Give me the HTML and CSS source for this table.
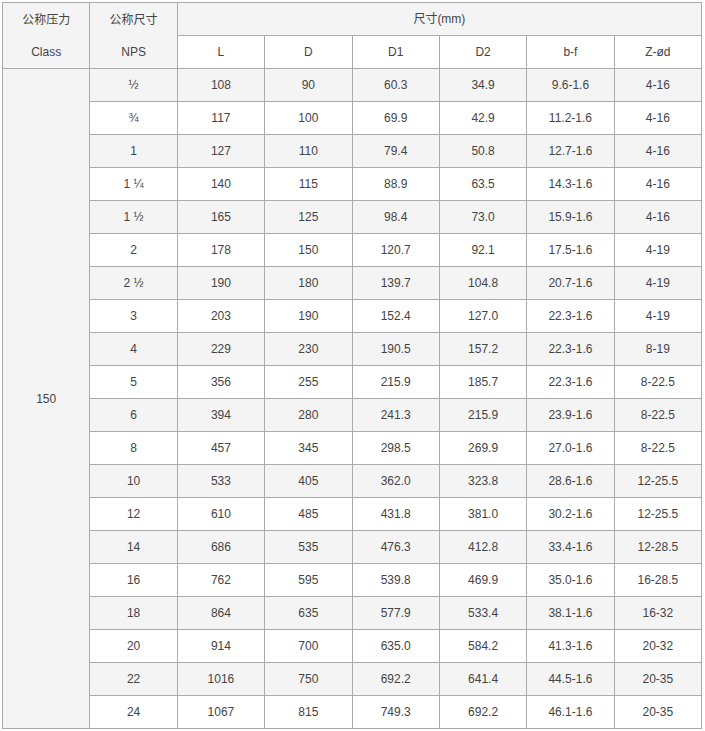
FILE: index.html
```html
<!DOCTYPE html>
<html lang="zh">
<head>
<meta charset="utf-8">
<link rel="stylesheet" href="styles.css">
</head>
<body>
<table class="spec">
  <colgroup>
    <col class="c"><col class="c"><col class="c"><col class="c"><col class="c"><col class="c"><col class="c"><col class="c">
  </colgroup>
  <tbody>
    <tr>
      <td rowspan="2" class="two">公称压力<br>Class</td>
      <td rowspan="2" class="two">公称尺寸<br>NPS</td>
      <td colspan="6">尺寸(mm)</td>
    </tr>
    <tr>
      <td>L</td><td>D</td><td>D1</td><td>D2</td><td>b-f</td><td>Z-ød</td>
    </tr>
    <tr><td rowspan="20">150</td><td>½</td><td>108</td><td>90</td><td>60.3</td><td>34.9</td><td>9.6-1.6</td><td>4-16</td></tr>
    <tr><td>¾</td><td>117</td><td>100</td><td>69.9</td><td>42.9</td><td>11.2-1.6</td><td>4-16</td></tr>
    <tr><td>1</td><td>127</td><td>110</td><td>79.4</td><td>50.8</td><td>12.7-1.6</td><td>4-16</td></tr>
    <tr><td>1 ¼</td><td>140</td><td>115</td><td>88.9</td><td>63.5</td><td>14.3-1.6</td><td>4-16</td></tr>
    <tr><td>1 ½</td><td>165</td><td>125</td><td>98.4</td><td>73.0</td><td>15.9-1.6</td><td>4-16</td></tr>
    <tr><td>2</td><td>178</td><td>150</td><td>120.7</td><td>92.1</td><td>17.5-1.6</td><td>4-19</td></tr>
    <tr><td>2 ½</td><td>190</td><td>180</td><td>139.7</td><td>104.8</td><td>20.7-1.6</td><td>4-19</td></tr>
    <tr><td>3</td><td>203</td><td>190</td><td>152.4</td><td>127.0</td><td>22.3-1.6</td><td>4-19</td></tr>
    <tr><td>4</td><td>229</td><td>230</td><td>190.5</td><td>157.2</td><td>22.3-1.6</td><td>8-19</td></tr>
    <tr><td>5</td><td>356</td><td>255</td><td>215.9</td><td>185.7</td><td>22.3-1.6</td><td>8-22.5</td></tr>
    <tr><td>6</td><td>394</td><td>280</td><td>241.3</td><td>215.9</td><td>23.9-1.6</td><td>8-22.5</td></tr>
    <tr><td>8</td><td>457</td><td>345</td><td>298.5</td><td>269.9</td><td>27.0-1.6</td><td>8-22.5</td></tr>
    <tr><td>10</td><td>533</td><td>405</td><td>362.0</td><td>323.8</td><td>28.6-1.6</td><td>12-25.5</td></tr>
    <tr><td>12</td><td>610</td><td>485</td><td>431.8</td><td>381.0</td><td>30.2-1.6</td><td>12-25.5</td></tr>
    <tr><td>14</td><td>686</td><td>535</td><td>476.3</td><td>412.8</td><td>33.4-1.6</td><td>12-28.5</td></tr>
    <tr><td>16</td><td>762</td><td>595</td><td>539.8</td><td>469.9</td><td>35.0-1.6</td><td>16-28.5</td></tr>
    <tr><td>18</td><td>864</td><td>635</td><td>577.9</td><td>533.4</td><td>38.1-1.6</td><td>16-32</td></tr>
    <tr><td>20</td><td>914</td><td>700</td><td>635.0</td><td>584.2</td><td>41.3-1.6</td><td>20-32</td></tr>
    <tr><td>22</td><td>1016</td><td>750</td><td>692.2</td><td>641.4</td><td>44.5-1.6</td><td>20-35</td></tr>
    <tr><td>24</td><td>1067</td><td>815</td><td>749.3</td><td>692.2</td><td>46.1-1.6</td><td>20-35</td></tr>
  </tbody>
</table>
</body>
</html>
```
FILE: styles.css
```css
html, body {
  margin: 0;
  padding: 0;
  background: #fff;
}
.spec {
  margin: 2px 0 0 2px;
  width: 700px;
  border-collapse: collapse;
  table-layout: fixed;
  font-family: "Liberation Sans", Arial, "Noto Sans CJK SC", sans-serif;
  font-size: 12px;
  color: #444;
}
.spec col.c {
  width: 12.5%;
}
.spec td {
  border: 1px solid #aaa;
  text-align: center;
  vertical-align: middle;
  padding: 0;
  height: 32px;
  line-height: 32px;
}
.spec tr:nth-child(odd) td {
  background: #f4f4f4;
}
.spec td.two {
  line-height: 32px;
}
```
